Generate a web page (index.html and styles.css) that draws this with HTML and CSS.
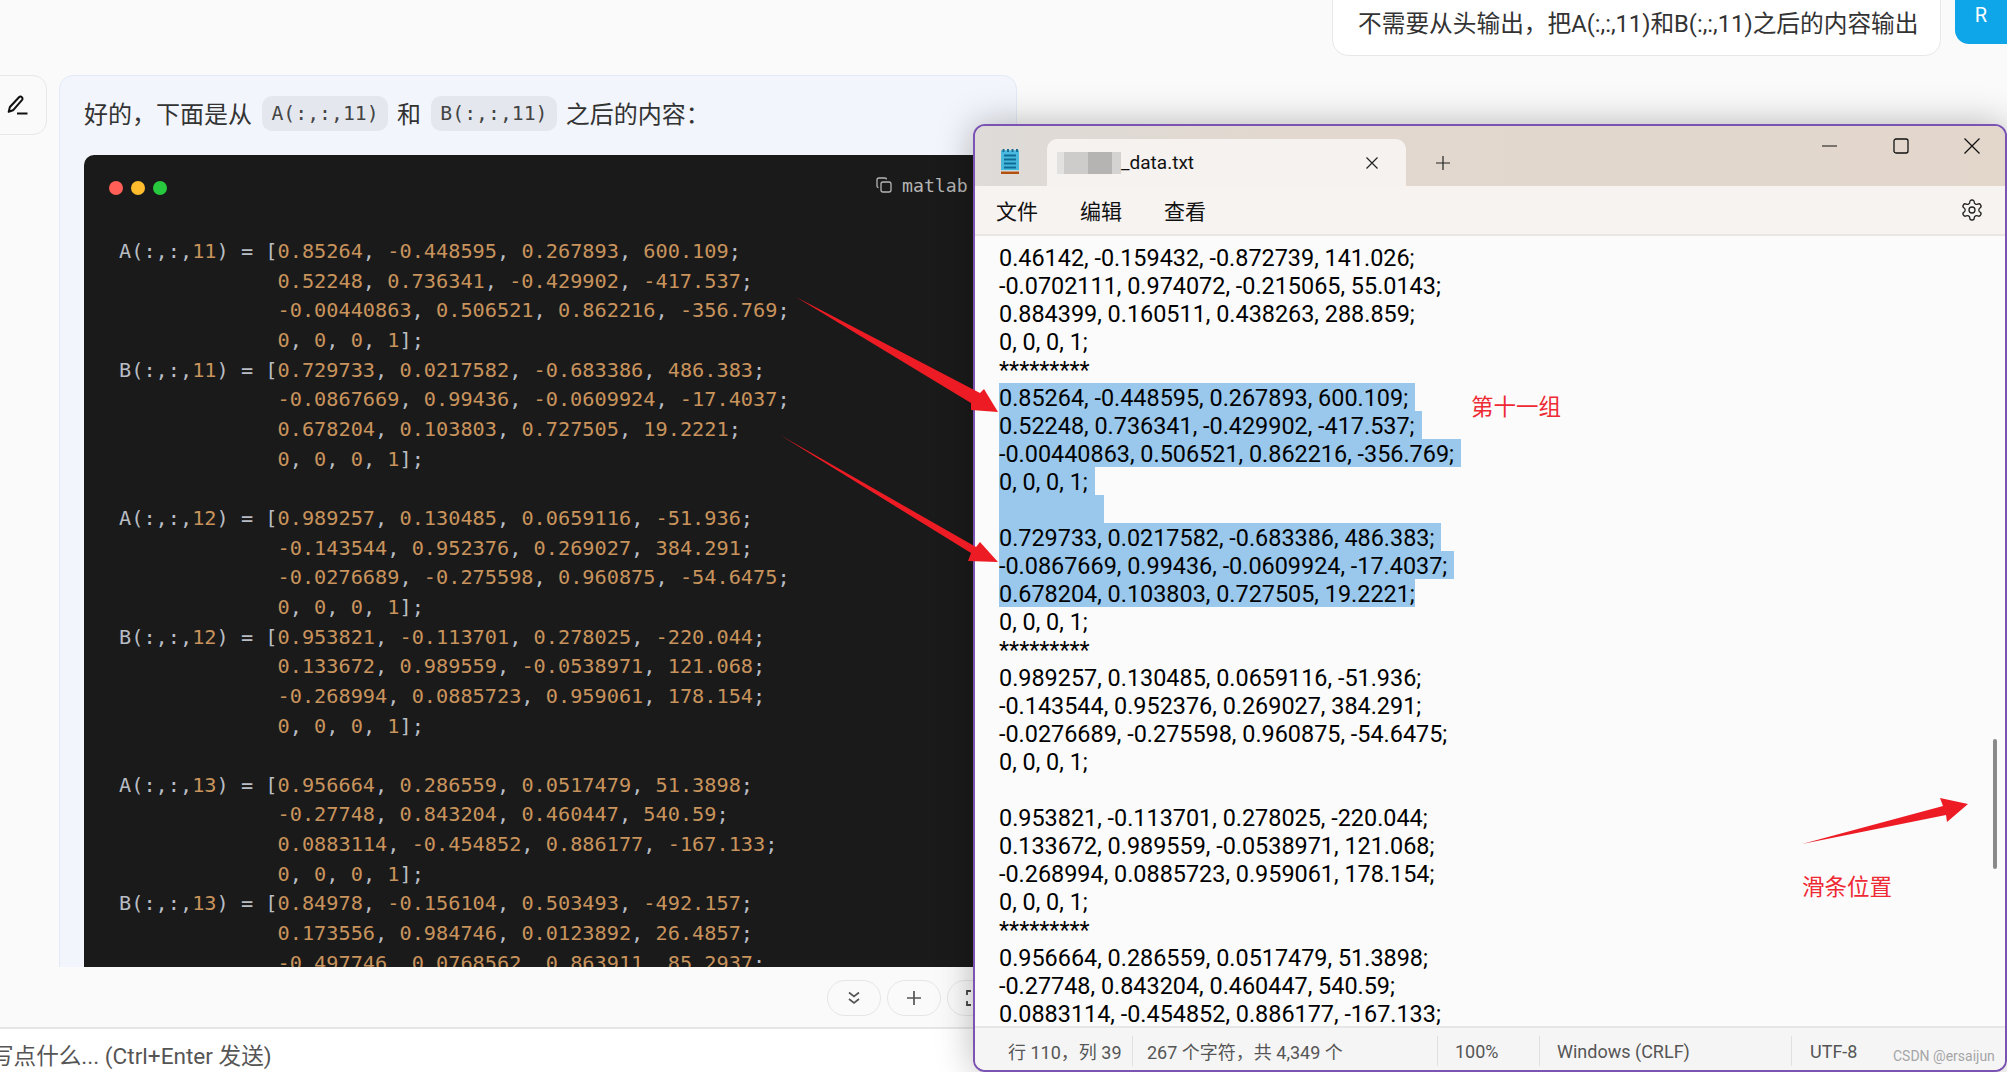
FILE: index.html
```html
<!DOCTYPE html>
<html lang="zh">
<head>
<meta charset="utf-8">
<title>Chat</title>
<link rel="stylesheet" href="styles.css">
</head>
<body>
<div class="page">
  <main class="chat">
    <div class="messages">
      <div class="user-row">
        <div class="user-bubble">不需要从头输出，把A(:,:,11)和B(:,:,11)之后的内容输出</div>
        <div class="avatar">R</div>
      </div>
      <div class="bot-row">
        <div class="edit-box">
          <svg class="pen" viewBox="0 0 20 20" width="21" height="20"><path d="M1.2 16.8 2.4 12 11.5 2.2a2 2 0 0 1 2.9 0 2 2 0 0 1 0 2.9L5.5 15.3z" fill="none" stroke="#111" stroke-width="2" stroke-linejoin="round"/><path d="M9.5 18.5H20" stroke="#111" stroke-width="2"/></svg>
        </div>
        <div class="bot-bubble">
          <p class="intro">好的，下面是从 <code class="chip">A(:,:,11)</code> 和 <code class="chip">B(:,:,11)</code> 之后的内容：</p>
          <div class="code">
            <div class="code-head">
              <span class="dot red"></span><span class="dot yellow"></span><span class="dot green"></span>
              <span class="lang">
                <svg viewBox="0 0 16 16" width="16" height="16"><rect x="5" y="5" width="10" height="10" rx="2" fill="none" stroke="#b5b5b5" stroke-width="1.3"/><path d="M2.5 10.5A1.5 1.5 0 0 1 1 9V3a2 2 0 0 1 2-2h6a1.5 1.5 0 0 1 1.5 1.5" fill="none" stroke="#b5b5b5" stroke-width="1.3"/></svg>
                matlab
              </span>
            </div>
<pre class="code-body">A(:,:,<i>11</i>) = [<i>0.85264</i>, <i>-0.448595</i>, <i>0.267893</i>, <i>600.109</i>;
             <i>0.52248</i>, <i>0.736341</i>, <i>-0.429902</i>, <i>-417.537</i>;
             <i>-0.00440863</i>, <i>0.506521</i>, <i>0.862216</i>, <i>-356.769</i>;
             <i>0</i>, <i>0</i>, <i>0</i>, <i>1</i>];
B(:,:,<i>11</i>) = [<i>0.729733</i>, <i>0.0217582</i>, <i>-0.683386</i>, <i>486.383</i>;
             <i>-0.0867669</i>, <i>0.99436</i>, <i>-0.0609924</i>, <i>-17.4037</i>;
             <i>0.678204</i>, <i>0.103803</i>, <i>0.727505</i>, <i>19.2221</i>;
             <i>0</i>, <i>0</i>, <i>0</i>, <i>1</i>];

A(:,:,<i>12</i>) = [<i>0.989257</i>, <i>0.130485</i>, <i>0.0659116</i>, <i>-51.936</i>;
             <i>-0.143544</i>, <i>0.952376</i>, <i>0.269027</i>, <i>384.291</i>;
             <i>-0.0276689</i>, <i>-0.275598</i>, <i>0.960875</i>, <i>-54.6475</i>;
             <i>0</i>, <i>0</i>, <i>0</i>, <i>1</i>];
B(:,:,<i>12</i>) = [<i>0.953821</i>, <i>-0.113701</i>, <i>0.278025</i>, <i>-220.044</i>;
             <i>0.133672</i>, <i>0.989559</i>, <i>-0.0538971</i>, <i>121.068</i>;
             <i>-0.268994</i>, <i>0.0885723</i>, <i>0.959061</i>, <i>178.154</i>;
             <i>0</i>, <i>0</i>, <i>0</i>, <i>1</i>];

A(:,:,<i>13</i>) = [<i>0.956664</i>, <i>0.286559</i>, <i>0.0517479</i>, <i>51.3898</i>;
             <i>-0.27748</i>, <i>0.843204</i>, <i>0.460447</i>, <i>540.59</i>;
             <i>0.0883114</i>, <i>-0.454852</i>, <i>0.886177</i>, <i>-167.133</i>;
             <i>0</i>, <i>0</i>, <i>0</i>, <i>1</i>];
B(:,:,<i>13</i>) = [<i>0.84978</i>, <i>-0.156104</i>, <i>0.503493</i>, <i>-492.157</i>;
             <i>0.173556</i>, <i>0.984746</i>, <i>0.0123892</i>, <i>26.4857</i>;
             <i>-0.497746</i>, <i>0.0768562</i>, <i>0.863911</i>, <i>85.2937</i>;</pre>
          </div>
        </div>
      </div>
    </div>
    <div class="tools">
      <button class="tool"><svg viewBox="0 0 16 16" width="16" height="16"><path d="M3 2.5l5 4 5-4M3 9l5 4 5-4" fill="none" stroke="#555" stroke-width="1.7"/></svg></button>
      <button class="tool"><svg viewBox="0 0 16 16" width="16" height="16"><path d="M8 1v14M1 8h14" stroke="#555" stroke-width="1.7"/></svg></button>
      <button class="tool"><svg viewBox="0 0 18 18" width="18" height="18"><path d="M6 2H2v4M12 2h4v4M6 16H2v-4M12 16h4v-4" fill="none" stroke="#444" stroke-width="1.8"/></svg></button>
    </div>
  </main>
  <footer class="composer">写点什么... (Ctrl+Enter 发送)</footer>

  <section class="window">
    <header class="titlebar">
      <svg class="note-icon" viewBox="0 0 19 25" width="19" height="25">
        <rect x="0" y="1.5" width="18" height="20" fill="#47b8dc"/>
        <rect x="0" y="1.5" width="18" height="7" fill="#4ab9df"/>
        <rect x="1.5" y="0" width="2" height="3" fill="#1a6f95"/><rect x="6" y="0" width="2" height="3" fill="#1a6f95"/><rect x="10.5" y="0" width="2" height="3" fill="#1a6f95"/><rect x="15" y="0" width="2" height="3" fill="#1a6f95"/>
        <path d="M3 6.5h12M3 10.5h12M3 14.5h12M3 18.5h12" stroke="#0e6c94" stroke-width="2"/>
        <rect x="0" y="21.5" width="18" height="1" fill="#e8f0f2"/>
        <rect x="0" y="22.5" width="18" height="2.5" fill="#b4500f"/>
      </svg>
      <div class="tab">
        <span class="blur"><b class="b1"></b><b class="b2"></b><b class="b3"></b><b class="b4"></b></span>
        <span class="tab-name">_data.txt</span>
        <svg class="tab-x" viewBox="0 0 14 14" width="14" height="14"><path d="M1.5 1.5l11 11M12.5 1.5l-11 11" stroke="#222" stroke-width="1.2"/></svg>
      </div>
      <svg class="tab-plus" viewBox="0 0 16 16" width="16" height="16"><path d="M8 1v14M1 8h14" stroke="#222" stroke-width="1.2"/></svg>
      <div class="controls">
        <span class="ctl"><svg viewBox="0 0 16 16" width="16" height="16"><path d="M0 8h15" stroke="#111" stroke-width="1.2"/></svg></span>
        <span class="ctl"><svg viewBox="0 0 16 16" width="16" height="16"><rect x="1" y="1" width="14" height="14" rx="2" fill="none" stroke="#111" stroke-width="1.3"/></svg></span>
        <span class="ctl"><svg viewBox="0 0 16 16" width="16" height="16"><path d="M.5.5l15 15M15.5.5l-15 15" stroke="#111" stroke-width="1.3"/></svg></span>
      </div>
    </header>
    <nav class="menubar">
      <span class="menu">文件</span><span class="menu">编辑</span><span class="menu">查看</span>
      <svg class="gear" viewBox="0 0 24 24" width="24" height="24"><path d="M12.22 2h-.44a2 2 0 0 0-2 2v.18a2 2 0 0 1-1 1.73l-.43.25a2 2 0 0 1-2 0l-.15-.08a2 2 0 0 0-2.73.73l-.22.38a2 2 0 0 0 .73 2.73l.15.1a2 2 0 0 1 1 1.72v.51a2 2 0 0 1-1 1.74l-.15.09a2 2 0 0 0-.73 2.73l.22.38a2 2 0 0 0 2.73.73l.15-.08a2 2 0 0 1 2 0l.43.25a2 2 0 0 1 1 1.73V20a2 2 0 0 0 2 2h.44a2 2 0 0 0 2-2v-.18a2 2 0 0 1 1-1.73l.43-.25a2 2 0 0 1 2 0l.15.08a2 2 0 0 0 2.73-.73l.22-.39a2 2 0 0 0-.73-2.73l-.15-.08a2 2 0 0 1-1-1.74v-.5a2 2 0 0 1 1-1.74l.15-.09a2 2 0 0 0 .73-2.73l-.22-.38a2 2 0 0 0-2.73-.73l-.15.08a2 2 0 0 1-2 0l-.43-.25a2 2 0 0 1-1-1.73V4a2 2 0 0 0-2-2z" fill="none" stroke="#222" stroke-width="1.3"/><circle cx="12" cy="12" r="3" fill="none" stroke="#222" stroke-width="1.3"/></svg>
    </nav>
    <div class="editor">
      <div class="ln">0.46142, -0.159432, -0.872739, 141.026;</div>
      <div class="ln">-0.0702111, 0.974072, -0.215065, 55.0143;</div>
      <div class="ln">0.884399, 0.160511, 0.438263, 288.859;</div>
      <div class="ln">0, 0, 0, 1;</div>
      <div class="ln">*********</div>
      <div class="ln sel">0.85264, -0.448595, 0.267893, 600.109;</div>
      <div class="ln sel">0.52248, 0.736341, -0.429902, -417.537;</div>
      <div class="ln sel">-0.00440863, 0.506521, 0.862216, -356.769;</div>
      <div class="ln sel">0, 0, 0, 1;</div>
      <div class="ln sel blank"></div>
      <div class="ln sel">0.729733, 0.0217582, -0.683386, 486.383;</div>
      <div class="ln sel">-0.0867669, 0.99436, -0.0609924, -17.4037;</div>
      <div class="ln sel last">0.678204, 0.103803, 0.727505, 19.2221;</div>
      <div class="ln">0, 0, 0, 1;</div>
      <div class="ln">*********</div>
      <div class="ln">0.989257, 0.130485, 0.0659116, -51.936;</div>
      <div class="ln">-0.143544, 0.952376, 0.269027, 384.291;</div>
      <div class="ln">-0.0276689, -0.275598, 0.960875, -54.6475;</div>
      <div class="ln">0, 0, 0, 1;</div>
      <div class="ln blank"></div>
      <div class="ln">0.953821, -0.113701, 0.278025, -220.044;</div>
      <div class="ln">0.133672, 0.989559, -0.0538971, 121.068;</div>
      <div class="ln">-0.268994, 0.0885723, 0.959061, 178.154;</div>
      <div class="ln">0, 0, 0, 1;</div>
      <div class="ln">*********</div>
      <div class="ln">0.956664, 0.286559, 0.0517479, 51.3898;</div>
      <div class="ln">-0.27748, 0.843204, 0.460447, 540.59;</div>
      <div class="ln">0.0883114, -0.454852, 0.886177, -167.133;</div>
      <div class="scrollbar"></div>
    </div>
    <div class="statusbar">
      <span class="st st-pos">行 110，列 39</span>
      <span class="st st-count">267 个字符，共 4,349 个</span>
      <span class="st st-zoom">100%</span>
      <span class="st st-eol">Windows (CRLF)</span>
      <span class="st st-enc">UTF-8</span>
    </div>
  </section>

  <svg class="marks" viewBox="0 0 2007 1072" width="2007" height="1072">
    <polygon fill="#ed1c24" points="796,297 980,393 984,389 998,412 971,410 971,403"/>
    <polygon fill="#ed1c24" points="780,435 976,547 980,542 998,562 968,561 971,553"/>
    <polygon fill="#ed1c24" points="1802,844 1943,806 1940,798 1968,804 1947,822 1946,815"/>
  </svg>
  <span class="note note-group">第十一组</span>
  <span class="note note-scroll">滑条位置</span>
  <span class="watermark">CSDN @ersaijun</span>
</div>
</body>
</html>
```
FILE: styles.css
```css
* { box-sizing: border-box; }
html, body { margin: 0; height: 100%; }
body { font-family: Roboto, "Noto Sans CJK SC", sans-serif; background: #fafafa; color: #333; overflow: hidden; }
.page { position: relative; width: 2007px; height: 1072px; overflow: hidden; display: flex; flex-direction: column; background: #fafafa; }
.chat { flex: 1; min-height: 0; display: flex; flex-direction: column; overflow: hidden; }
.messages { height: 967px; flex: none; overflow: hidden; }

.user-row { display: flex; justify-content: flex-end; align-items: flex-end; gap: 14px; height: 56px; }
.user-bubble { width: 609px; height: 76px; flex: none; margin-top: -20px; padding: 0 25px; line-height: 86px; font-size: 23.7px; white-space: nowrap; background: #fff; border: 1px solid #e8e8e8; border-radius: 16px; color: #333; align-self: flex-end; }
.avatar { width: 52px; height: 64px; flex: none; align-self: flex-start; margin-top: -20px; padding-top: 20px; background: #0ea5e9; border-radius: 0 0 0 14px; color: #fff; font-size: 20px; line-height: 30px; text-align: center; }

.bot-row { display: flex; align-items: flex-start; gap: 12px; margin-top: 19px; margin-left: -14px; }
.edit-box { width: 61px; height: 60px; flex: none; display: flex; align-items: center; justify-content: flex-end; padding-right: 18px; border: 1px solid #e8e8e8; border-radius: 14px; background: #fafafa; }
.bot-bubble { width: 958px; flex: none; height: 920px; padding: 0 24px; background: #f2f5fb; border: 1px solid #e3e9f6; border-radius: 14px 14px 0 0; overflow: hidden; }
.intro { margin: 21px 0 21px; height: 37px; line-height: 37px; font-size: 24px; color: #333; white-space: nowrap; }
.chip { display: inline-block; height: 35px; line-height: 35px; padding: 0 9px; margin: -1px 3.3px 0 4.5px; background: #e4e8ee; border-radius: 10px; font-family: "DejaVu Sans Mono", monospace; font-size: 19.8px; color: #444; vertical-align: top; }
.code { background: #1a1a1a; border-radius: 10px 10px 0 0; width: 1000px; height: 820px; overflow: hidden; }
.code-head { position: relative; display: flex; align-items: center; gap: 8px; height: 66px; padding: 0 0 0 25px; }
.dot { width: 14px; height: 14px; border-radius: 50%; }
.red { background: #ff5f56; }
.yellow { background: #ffbd2e; }
.green { background: #27c93f; }
.lang { display: flex; align-items: center; gap: 10px; margin-left: 701px; margin-top: -6px; font-family: "DejaVu Sans Mono", monospace; font-size: 18.2px; color: #b5b5b5; }
.code-body { margin: 16px 0 0; padding: 0 0 0 35px; font-family: "DejaVu Sans Mono", monospace; font-size: 20.25px; line-height: 29.65px; color: #b9bdc4; }
.code-body i { font-style: normal; color: #c8935c; }

.tools { flex: 1; display: flex; align-items: flex-start; gap: 6px; padding: 13px 0 0 827px; }
.tool { width: 54px; height: 36px; flex: none; display: flex; align-items: center; justify-content: center; padding: 0; background: #fafafa; border: 1px solid #e6e6e6; border-radius: 18px; }

.composer { height: 45px; flex: none; background: #fff; border-top: 2px solid #e6e6e6; text-indent: -9px; line-height: 56px; font-size: 22.6px; color: #555; white-space: nowrap; overflow: hidden; }

.window { position: absolute; left: 973px; top: 124px; width: 1034px; height: 948px; display: flex; flex-direction: column; border: 2px solid #7a53b3; border-radius: 12px; overflow: hidden; background: #fbfbfb; box-shadow: 0 0 36px rgba(0, 0, 0, .28); color: #000; }
.titlebar { height: 60px; flex: none; display: flex; align-items: flex-end; background: linear-gradient(90deg, #dedbd8, #e2d8cf 30%, #e3d7cc); }
.note-icon { margin: 0 0 12px 26px; flex: none; }
.tab { width: 359px; height: 47px; flex: none; margin-left: 27px; display: flex; align-items: center; padding-left: 10px; background: #f5f2ef; border-radius: 10px 10px 0 0; }
.blur { display: flex; height: 22px; flex: none; }
.blur b { display: block; height: 22px; }
.b1 { width: 7px; background: #e2e1df; }
.b2 { width: 24px; background: #cdccca; }
.b3 { width: 24px; background: #b5b4b2; }
.b4 { width: 9px; background: #d4d3d1; }
.tab-name { font-size: 19px; color: #111; width: 244px; flex: none; }
.tab-x { flex: none; }
.tab-plus { margin: 0 0 15px 29px; flex: none; }
.controls { display: flex; margin-left: auto; margin-right: -2px; align-self: flex-start; }
.ctl { width: 71px; height: 40px; display: flex; align-items: center; justify-content: center; }
.menubar { height: 50px; flex: none; display: flex; align-items: center; padding-left: 21px; gap: 42px; background: #f6f3f0; border-bottom: 2px solid #e9e6e3; font-size: 21px; color: #111; }
.gear { margin-left: auto; margin-right: 21px; }
.editor { position: relative; flex: 1; min-height: 0; overflow: hidden; padding: 7px 0 0 24px; background: #fbfbfb; font-size: 23.4px; }
.ln { height: 28px; line-height: 30px; white-space: nowrap; width: fit-content; }
.sel { background: #99c8ec; padding-right: 7px; }
.sel.last { padding-right: 0; }
.ln.blank { width: 105px; }
.scrollbar { position: absolute; right: 8px; top: 503px; width: 4px; height: 130px; border-radius: 2px; background: #8a8a8a; }
.statusbar { height: 44px; flex: none; display: flex; align-items: stretch; background: #f5f5f6; border-top: 2px solid #e6e6e6; font-size: 18px; color: #555; padding-left: 33px; }
.st { display: flex; align-items: center; height: 30px; margin-top: 8px; white-space: nowrap; }
.st + .st { border-left: 1px solid #e0e0e0; padding-left: 14px; }
.st-pos { width: 124px; }
.st-count { width: 305px; }
.st-zoom { width: 102px; padding-left: 17px !important; }
.st-eol { width: 252px; padding-left: 17px !important; }
.st-enc { width: 100px; padding-left: 18px !important; }

.marks { position: absolute; left: 0; top: 0; pointer-events: none; }
.note { position: absolute; font-size: 22.5px; line-height: 30px; color: #ee2a34; white-space: nowrap; }
.note-group { left: 1471px; top: 392px; }
.note-scroll { left: 1802px; top: 872px; }
.watermark { position: absolute; left: 1893px; top: 1047px; font-size: 14px; line-height: 18px; color: #a6a6a6; white-space: nowrap; }
```
